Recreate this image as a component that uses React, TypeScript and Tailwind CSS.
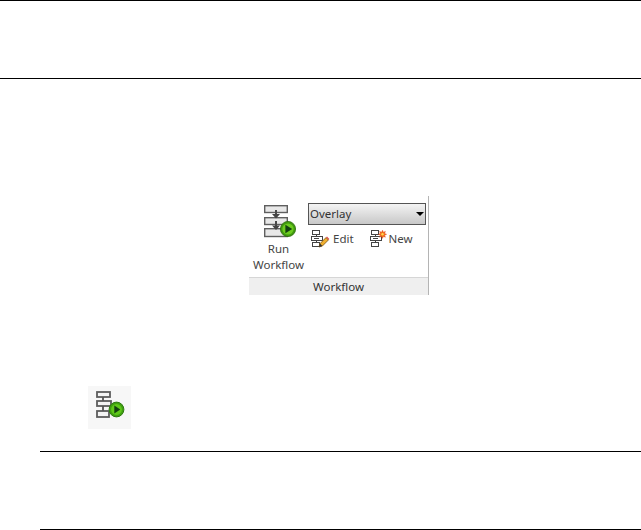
import React from 'react';

function RunWorkflowIcon() {
  return (
    <svg width="34" height="33" viewBox="0 0 34 33" fill="none">
      <g stroke="#5f5f5f" strokeWidth="1.4" fill="#e8e8e8">
        <rect x="1.7" y="0.7" width="22.6" height="6.8" />
        <rect x="1.7" y="12.7" width="22.6" height="6.8" />
        <rect x="1.7" y="23.7" width="22.6" height="7.8" />
      </g>
      <path d="M13 5v5M13 16v7" stroke="#4a4a4a" strokeWidth="2" />
      <path d="M9 9h8l-4 4.4zM9 20.5h8l-4 4.4z" fill="#444" />
      <circle cx="25" cy="24" r="7.6" fill="#3f9a0e" stroke="#2c6b0a" strokeWidth="0.8" />
      <circle cx="25" cy="24" r="5.6" fill="#6ccb1f" />
      <path d="M22.4 19.8l6.8 4.2-6.8 4.2z" fill="#123f10" />
    </svg>
  );
}

function FlowGlyph() {
  return (
    <g stroke="#444" strokeWidth="1" fill="#fff">
      <rect x="1.5" y="0.5" width="7" height="4" />
      <rect x="0.5" y="6.5" width="11" height="4" />
      <rect x="1.5" y="12.5" width="7" height="4" />
      <path d="M5.5 4.5v2M5.5 10.5v2M3 8.5h5" />
    </g>
  );
}

function EditIcon() {
  return (
    <svg width="20" height="18" viewBox="0 0 20 18" fill="none">
      <FlowGlyph />
      <path d="M8 17l1-3.4 6-6 2.4 2.4-6 6z" fill="#f0b030" stroke="#7a5010" strokeWidth="0.8" />
      <path d="M8 17l1-3.4 2.4 2.4z" fill="#333" />
      <path d="M15 7.6l2.4 2.4 1-1-2.4-2.4z" fill="#d9534f" />
    </svg>
  );
}

function NewIcon() {
  return (
    <svg width="19" height="18" viewBox="0 0 19 18" fill="none">
      <FlowGlyph />
      <path
        d="M12.5 0.2l0.9 2 2-0.8-0.8 2 2 .9-2 .9.8 2-2-.8-.9 2-.9-2-2 .8.8-2-2-.9 2-.9-.8-2 2 .8z"
        fill="#f2701d"
        stroke="#e03a10"
        strokeWidth="0.4"
      />
      <circle cx="12.5" cy="4.2" r="1.2" fill="#ffd84a" />
    </svg>
  );
}

function WorkflowThumb() {
  return (
    <svg width="32" height="34" viewBox="0 0 32 34" fill="none" className="blur-[0.3px]">
      <g stroke="#5c5c5c" strokeWidth="1.8" fill="#f4f4f4">
        <rect x="3" y="1" width="13" height="5" />
        <rect x="3" y="10" width="14" height="5" />
        <rect x="3" y="20" width="12" height="6" />
      </g>
      <path d="M9 6v4M9 15v5" stroke="#555" strokeWidth="1.8" />
      <circle cx="22.5" cy="18.5" r="7.4" fill="#3f9f10" stroke="#2d7a10" />
      <circle cx="22.5" cy="18.5" r="5.4" fill="#5fc81a" />
      <path d="M20.3 14.5l6 4-6 4z" fill="#123f10" />
    </svg>
  );
}

export default function App() {
  return (
    <div className="w-[641px] h-[530px] bg-white flex flex-col overflow-hidden font-['Noto_Sans',sans-serif]">
      <div className="h-[79px] shrink-0 border-t border-b border-black" />

      <div className="mt-[117px] ml-[249px] w-[182px] h-[99px] flex shrink-0">
        <div className="w-[179px] flex flex-col">
          <div className="h-[81px] flex">
            <div className="w-[59px] flex flex-col items-center pt-[9px]">
              <div className="ml-[3px]">
                <RunWorkflowIcon />
              </div>
              <div className="mt-[3px] text-[11.5px] leading-[16px] text-[#444] text-center">
                <div>Run</div>
                <div>Workflow</div>
              </div>
            </div>
            <div className="pt-[7px] w-[118px]">
              <div className="h-[22px] border border-[#555] bg-gradient-to-b from-[#f4f4f4] to-[#c8c8c8] flex items-center justify-between pl-[1px] pr-[1px]">
                <span className="text-[11.5px] leading-none text-[#333]">Overlay</span>
                <span className="w-0 h-0 border-l-[4px] border-r-[4px] border-t-[4px] border-l-transparent border-r-transparent border-t-black" />
              </div>
              <div className="mt-[5px] flex items-center pl-[3px]">
                <EditIcon />
                <span className="ml-[2px] text-[11.5px] leading-[18px] text-[#444]">Edit</span>
                <span className="ml-[16px] flex items-center">
                  <NewIcon />
                  <span className="text-[11.5px] leading-[18px] text-[#444]">New</span>
                </span>
              </div>
            </div>
          </div>
          <div className="h-[18px] bg-[#efefef] border-t border-[#d6d6d6] text-center text-[11.5px] leading-[17px] text-[#333]">
            Workflow
          </div>
        </div>
        <div className="w-[1px] bg-[#b4b4b4]" />
      </div>

      <div className="mt-[91px] ml-[88px] w-[43px] h-[43px] bg-[#f7f7f7] flex items-center justify-center shrink-0">
        <WorkflowThumb />
      </div>

      <div className="mt-[22px] ml-[40px] h-[79px] shrink-0 border-t border-b border-black" />
    </div>
  );
}
